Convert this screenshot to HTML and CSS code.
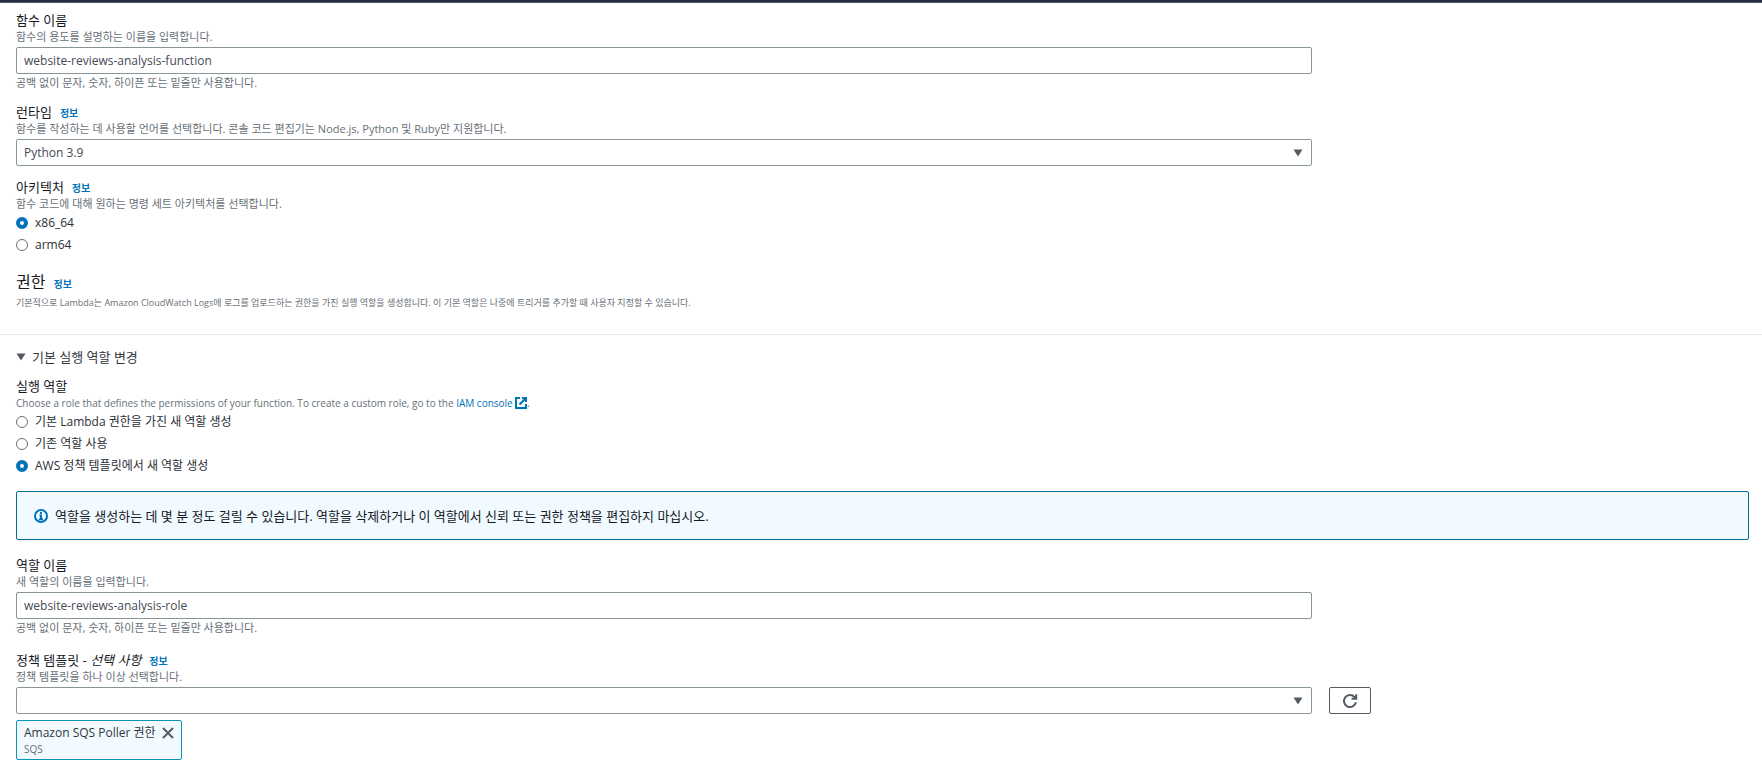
FILE: index.html
```
<!DOCTYPE html>
<html lang="ko">
<head>
    <meta charset="UTF-8">
    <meta name="viewport" content="width=device-width, initial-scale=1">
    <title>함수 생성</title>
    <link rel="stylesheet" href="styles.css">
</head>
<body>
    <header class="top-bar"></header>

    <main class="content">
        <div class="form-grid">
            <div class="field">
                <label class="field-label" for="functionName">함수 이름</label>
                <p class="field-desc">함수의 용도를 설명하는 이름을 입력합니다.</p>
                <input class="text-input" type="text" id="functionName" value="website-reviews-analysis-function">
                <p class="field-hint">공백 없이 문자, 숫자, 하이픈 또는 밑줄만 사용합니다.</p>
            </div>

            <div class="field">
                <div class="label-row">
                    <label class="field-label" for="runtime">런타임</label>
                    <a class="info-link" href="#">정보</a>
                </div>
                <p class="field-desc">함수를 작성하는 데 사용할 언어를 선택합니다. 콘솔 코드 편집기는 Node.js, Python 및 Ruby만 지원합니다.</p>
                <div class="select-wrap">
                    <select class="select" id="runtime">
                        <option>Python 3.9</option>
                    </select>
                    <svg class="caret" viewBox="0 0 10 8"><path d="M0.5 0.5h9L5 7.5z"/></svg>
                </div>
            </div>
        </div>

        <fieldset class="radio-group">
            <legend class="label-row">
                <span class="field-label">아키텍처</span>
                <a class="info-link" href="#">정보</a>
            </legend>
            <p class="field-desc">함수 코드에 대해 원하는 명령 세트 아키텍처를 선택합니다.</p>
            <label class="radio"><input type="radio" name="arch" checked> x86_64</label>
            <label class="radio"><input type="radio" name="arch"> arm64</label>
        </fieldset>

        <section class="permissions">
            <div class="label-row">
                <h3>권한</h3>
                <a class="info-link" href="#">정보</a>
            </div>
            <p class="small-desc">기본적으로 Lambda는 Amazon CloudWatch Logs에 로그를 업로드하는 권한을 가진 실행 역할을 생성합니다. 이 기본 역할은 나중에 트리거를 추가할 때 사용자 지정할 수 있습니다.</p>
        </section>
    </main>

    <hr class="divider">

    <section class="content role">
        <button class="expander" type="button" aria-expanded="true">
            <svg class="caret-left" viewBox="0 0 10 8"><path d="M0.5 0.5h9L5 7.5z"/></svg>
            기본 실행 역할 변경
        </button>

        <fieldset class="radio-group">
            <legend class="field-label">실행 역할</legend>
            <p class="field-desc latin">Choose a role that defines the permissions of your function. To create a custom role, go to the <a class="link" href="#">IAM console <svg class="external" viewBox="0 0 12 12"><path d="M5 1H1v10h10V7M7 1h4v4M11 1L4.5 7.5"/></svg></a>.</p>
            <label class="radio"><input type="radio" name="role"> 기본 Lambda 권한을 가진 새 역할 생성</label>
            <label class="radio"><input type="radio" name="role"> 기존 역할 사용</label>
            <label class="radio"><input type="radio" name="role" checked> AWS 정책 템플릿에서 새 역할 생성</label>
        </fieldset>

        <div class="alert">
            <svg class="alert-icon" viewBox="0 0 14 14">
                <circle cx="7" cy="7" r="6"/>
                <path d="M7 3v2M5.5 6.5H7V10M5 10.2h4"/>
            </svg>
            <span>역할을 생성하는 데 몇 분 정도 걸릴 수 있습니다. 역할을 삭제하거나 이 역할에서 신뢰 또는 권한 정책을 편집하지 마십시오.</span>
        </div>

        <div class="form-grid">
            <div class="field">
                <label class="field-label" for="roleName">역할 이름</label>
                <p class="field-desc">새 역할의 이름을 입력합니다.</p>
                <input class="text-input" type="text" id="roleName" value="website-reviews-analysis-role">
                <p class="field-hint">공백 없이 문자, 숫자, 하이픈 또는 밑줄만 사용합니다.</p>
            </div>

            <div class="field templates">
                <div class="label-row">
                    <label class="field-label" for="template">정책 템플릿 - <em>선택 사항</em></label>
                    <a class="info-link" href="#">정보</a>
                </div>
                <p class="field-desc">정책 템플릿을 하나 이상 선택합니다.</p>
                <div class="select-wrap">
                    <select class="select" id="template">
                        <option></option>
                    </select>
                    <svg class="caret" viewBox="0 0 10 8"><path d="M0.5 0.5h9L5 7.5z"/></svg>
                </div>
            </div>
            <button class="refresh-btn" type="button" aria-label="새로 고침">
                <svg viewBox="0 0 16 16"><path d="M13.9 9.2A6 6 0 1 1 12.6 4.2L14 5.6M14.2 1.2v4.6H9.6"/></svg>
            </button>
        </div>

        <div class="token">
            <div class="token-text">
                <span class="token-name">Amazon SQS Poller 권한</span>
                <span class="token-tag">SQS</span>
            </div>
            <button class="token-close" type="button" aria-label="제거">
                <svg viewBox="0 0 12 12"><path d="M1 1l10 10M11 1L1 11"/></svg>
            </button>
        </div>
    </section>
</body>
</html>
```

FILE: styles.css
```
* {
    box-sizing: border-box;
}

body {
    margin: 0;
    background: #fff;
    color: #16191f;
    font-family: "Open Sans", "Noto Sans CJK KR", sans-serif;
    font-size: 12px;
    line-height: 16px;
}

p, h3, fieldset, legend {
    margin: 0;
    padding: 0;
    border: 0;
}

input, select, button {
    font: inherit;
    color: inherit;
}

a {
    color: #0073bb;
    text-decoration: none;
}

a:hover {
    text-decoration: underline;
}

.top-bar {
    height: 3px;
    background: #232f3e;
    border-bottom: 1px solid #545b64;
}

.content {
    padding: 9px 13px 0 16px;
}

.form-grid {
    display: grid;
    grid-template-columns: repeat(12, 1fr);
    column-gap: 17px;
    row-gap: 13px;
}

.field {
    grid-column: 1 / span 9;
}

.label-row {
    display: flex;
    align-items: baseline;
    gap: 8px;
}

.field-label {
    display: block;
    font-size: 13px;
    line-height: 16px;
}

.info-link {
    font-size: 10px;
    font-weight: 700;
    line-height: 12px;
}

.field-desc,
.field-hint {
    font-size: 11px;
    color: #687078;
}

.field-desc {
    margin-top: 1px;
}

.field-desc.latin {
    font-size: 10px;
}

.text-input,
.select {
    display: block;
    width: 100%;
    height: 27px;
    padding: 0 7px;
    border: 1px solid #879596;
    border-radius: 2px;
    background: #fff;
    color: #444b54;
}

.text-input {
    margin: 2px 0 1px;
}

.select {
    appearance: none;
}

.select-wrap {
    position: relative;
    margin-top: 2px;
}

.caret {
    position: absolute;
    top: 10px;
    right: 9px;
    width: 10px;
    height: 8px;
    fill: #545b64;
    pointer-events: none;
}

.radio-group {
    margin-top: 13px;
}

.radio {
    display: flex;
    align-items: center;
    gap: 7px;
    width: max-content;
    height: 22px;
    font-size: 12px;
    color: #2a2f37;
}

.radio input {
    appearance: none;
    width: 12px;
    height: 12px;
    margin: 0;
    border: 1px solid #687078;
    border-radius: 50%;
    background: #fff;
}

.radio input:checked {
    border: 4px solid #0073bb;
}

.permissions {
    margin-top: 16px;
}

.permissions h3 {
    font-size: 16px;
    font-weight: 400;
    line-height: 20px;
}

.small-desc {
    margin-top: 4px;
    font-size: 9px;
    line-height: 14px;
    color: #687078;
}

.divider {
    margin: 24px 0 0;
    border: 0;
    border-top: 1px solid #e4e6e8;
}

.role {
    padding-top: 14px;
    padding-bottom: 3px;
}

.expander {
    display: flex;
    align-items: center;
    gap: 6px;
    padding: 0;
    border: 0;
    background: none;
    font-size: 13px;
    line-height: 16px;
    color: #31363e;
}

.caret-left {
    width: 10px;
    height: 8px;
    fill: #545b64;
}

.external {
    width: 12px;
    height: 12px;
    vertical-align: -2px;
    fill: none;
    stroke: #0073bb;
    stroke-width: 2;
}

.alert {
    display: flex;
    align-items: center;
    gap: 7px;
    min-height: 49px;
    margin: 14px 0 17px;
    padding: 8px 17px;
    border: 1px solid #0a6a96;
    border-radius: 2px;
    background: #f1faff;
    font-size: 13px;
}

.alert-icon {
    width: 14px;
    height: 14px;
    flex-shrink: 0;
    fill: none;
    stroke: #0073bb;
    stroke-width: 2;
}

.templates {
    margin-top: 3px;
}

.refresh-btn {
    grid-column: 10;
    align-self: end;
    display: flex;
    align-items: center;
    justify-content: center;
    width: 42px;
    height: 27px;
    padding: 0;
    border: 1px solid #545b64;
    border-radius: 2px;
    background: #fff;
}

.refresh-btn svg {
    width: 16px;
    height: 16px;
    fill: none;
    stroke: #545b64;
    stroke-width: 2;
}

.token {
    display: flex;
    align-items: flex-start;
    gap: 6px;
    width: max-content;
    margin-top: 6px;
    padding: 4px 7px 2px;
    border: 1px solid #0a96b8;
    border-radius: 2px;
    background: #f1faff;
}

.token-text {
    display: flex;
    flex-direction: column;
    color: #31363e;
}

.token-tag {
    font-size: 10px;
    color: #687078;
}

.token-close {
    display: flex;
    padding: 2px 0;
    border: 0;
    background: none;
    cursor: pointer;
}

.token-close svg {
    width: 12px;
    height: 12px;
    fill: none;
    stroke: #545b64;
    stroke-width: 2;
}
```
